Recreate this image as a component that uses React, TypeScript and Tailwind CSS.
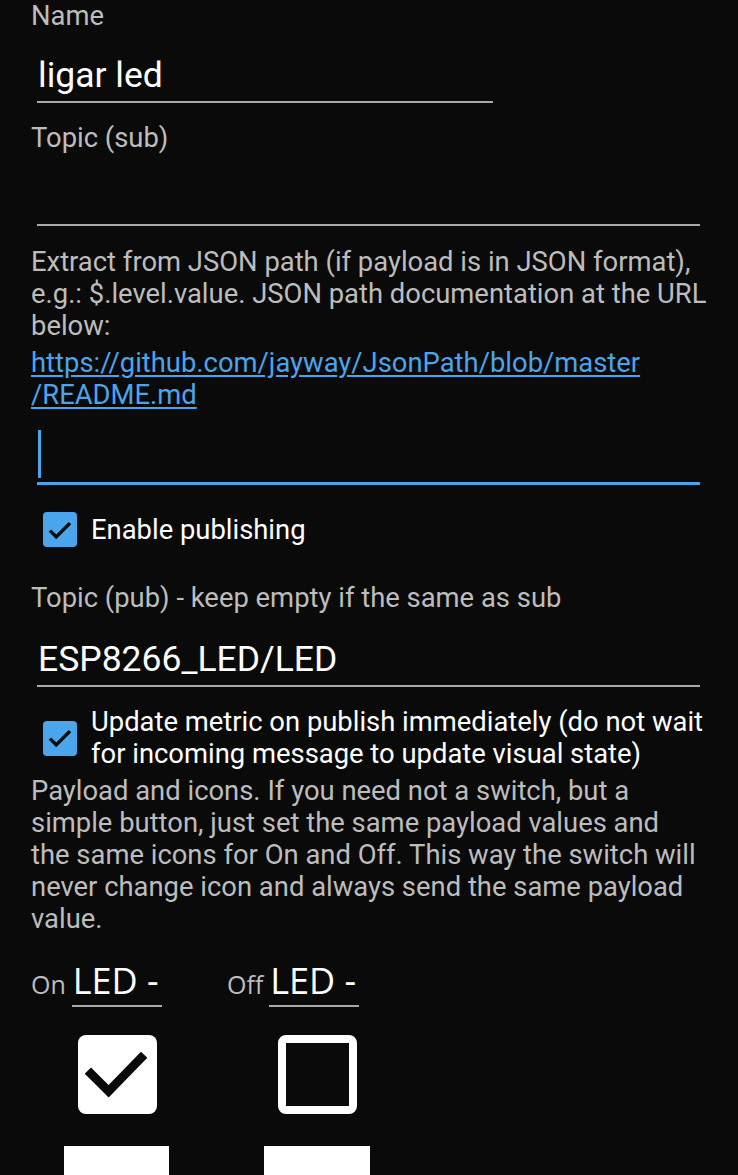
const label = "text-[#bdbdbd] text-[27.4px] leading-[32px]";

function Check({ className }: { className: string }) {
  return (
    <div className={`flex items-center justify-center rounded-[4px] bg-[#4aa5ec] ${className}`}>
      <svg viewBox="0 0 24 24" className="w-[30px] h-[30px]">
        <path d="M4 12.5l5 5 11-11" fill="none" stroke="#0a0a0a" strokeWidth="2.8" />
      </svg>
    </div>
  );
}

export default function App() {
  return (
    <div className="w-[738px] h-[1175px] overflow-hidden bg-[#0a0a0a] font-['Roboto',sans-serif]">
      <div className="pl-[31px] pr-[28px]">
        <p className={label}>Name</p>
        <div className="ml-[6px] w-[456px] pt-[23px] pb-[6px] border-b-2 border-[#a9a9a9]">
          <span className="block text-white text-[35.5px] leading-[40px] pl-[1px]">ligar led</span>
        </div>

        <p className={`${label} mt-[19px]`}>Topic (sub)</p>
        <div className="ml-[6px] mr-[10px] h-[72px] border-b-2 border-[#a9a9a9]" />

        <p className={`${label} mt-[20px]`}>
          Extract from JSON path (if payload is in JSON format), e.g.: $.level.value. JSON path documentation at the URL below:
        </p>
        <p className="text-[#4aa5ec] text-[27.4px] leading-[32px] underline underline-offset-[3px] mt-[5px]">
          https://github.com/jayway/JsonPath/blob/master
          <br />
          /README.md
        </p>
        <div className="ml-[6px] mr-[10px] h-[74px] border-b-[3px] border-[#4aa5ec] flex items-end pb-[4px]">
          <div className="w-[3px] h-[48px] bg-[#4aa5ec] ml-[1px]" />
        </div>

        <div className="flex items-center mt-[27px] h-[35px]">
          <Check className="ml-[12px] w-[34px] h-[35px]" />
          <span className="ml-[14px] text-white text-[27.4px] leading-[32px]">Enable publishing</span>
        </div>

        <p className={`${label} mt-[35px]`}>Topic (pub) - keep empty if the same as sub</p>
        <div className="ml-[6px] mr-[10px] pt-[25px] pb-[6px] border-b-2 border-[#a9a9a9]">
          <span className="block text-white text-[35.5px] leading-[40px] pl-[1px]">ESP8266_LED/LED</span>
        </div>

        <div className="flex items-center mt-[19px]">
          <Check className="ml-[12px] w-[34px] h-[35px] shrink-0" />
          <span className="ml-[14px] text-white text-[27.4px] leading-[32px]">
            Update metric on publish immediately (do not wait for incoming message to update visual state)
          </span>
        </div>

        <p className={`${label} mt-[5px] pr-[8px]`}>
          Payload and icons. If you need not a switch, but a simple button, just set the same payload values and the same icons for On and Off. This way the switch will never change icon and always send the same payload value.
        </p>

        <div className="flex mt-[24px] font-['Open_Sans',sans-serif]">
          <div className="w-[196px]">
            <div className="flex items-baseline">
              <span className="text-[#bdbdbd] text-[25px] mr-[6px]">On</span>
              <span className="w-[90px] text-white text-[36px] leading-[44px] border-b-2 border-[#a9a9a9] pb-[2px] pl-[1px]">LED -</span>
            </div>
            <div className="ml-[47px] mt-[28px] w-[79px] h-[79px] rounded-[8px] bg-white">
              <svg viewBox="0 0 80 80" className="w-[79px] h-[79px]">
                <path d="M10 36l21 21 36-37" fill="none" stroke="#0a0a0a" strokeWidth="9" />
              </svg>
            </div>
          </div>
          <div>
            <div className="flex items-baseline">
              <span className="text-[#bdbdbd] text-[25px] mr-[6px]">Off</span>
              <span className="w-[90px] text-white text-[36px] leading-[44px] border-b-2 border-[#a9a9a9] pb-[2px] pl-[1px]">LED -</span>
            </div>
            <div className="ml-[51px] mt-[28px] w-[79px] h-[79px] rounded-[8px] border-[8px] border-white" />
          </div>
        </div>

        <div className="flex mt-[32px]">
          <div className="ml-[33px] w-[105px] h-[40px] bg-white" />
          <div className="ml-[95px] w-[106px] h-[40px] bg-white" />
        </div>
      </div>
    </div>
  );
}
